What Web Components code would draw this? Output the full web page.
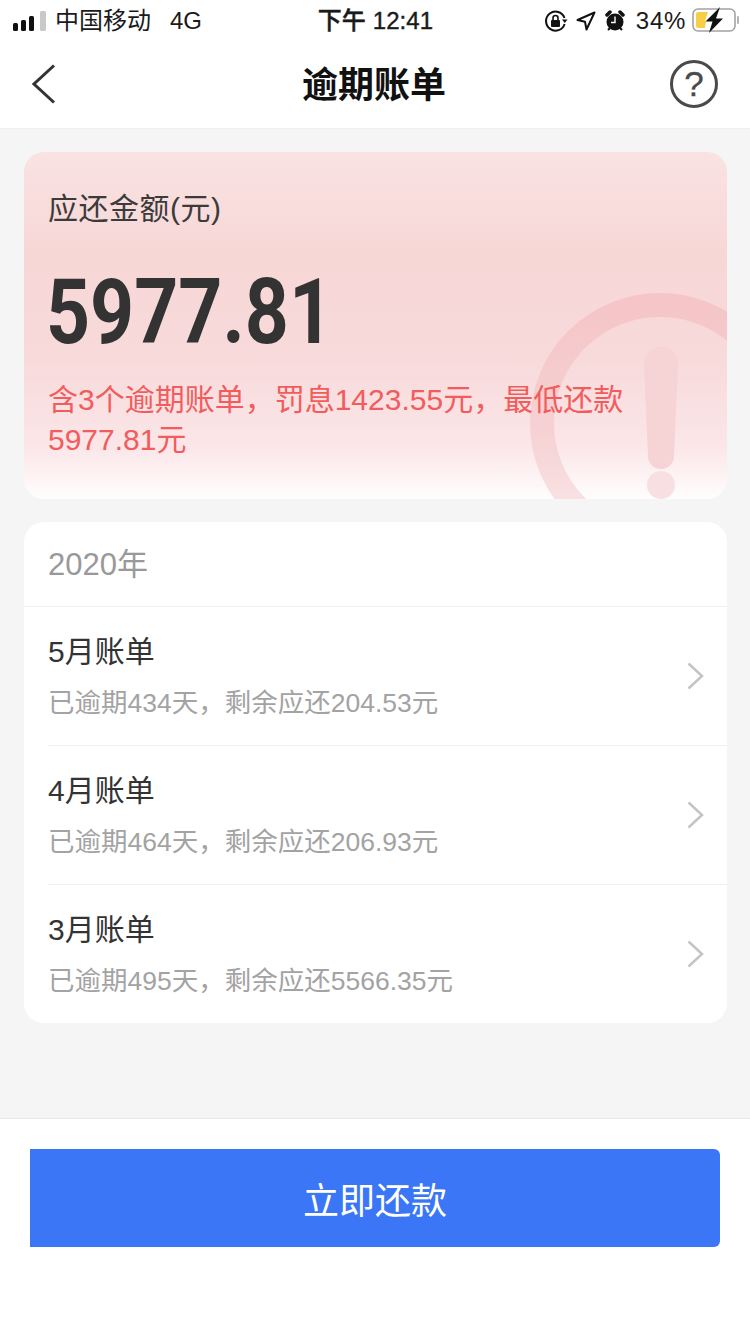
<!DOCTYPE html>
<html lang="zh">
<head>
<meta charset="utf-8">
<title>逾期账单</title>
<style>
html,body{margin:0;padding:0;background:#f5f5f5;}
body{font-family:"Liberation Sans","Noto Sans CJK SC",sans-serif;}
</style>
</head>
<body>
<bill-page>
    <status-bar></status-bar>
    <nav-bar title="逾期账单"></nav-bar>
    <amount-card label="应还金额(元)" amount="5977.81">含3个逾期账单，罚息1423.55元，最低还款5977.81元</amount-card>
    <bill-list year="2020年">
        <bill-row name="5月账单" desc="已逾期434天，剩余应还204.53元"></bill-row>
        <bill-row name="4月账单" desc="已逾期464天，剩余应还206.93元"></bill-row>
        <bill-row name="3月账单" desc="已逾期495天，剩余应还5566.35元"></bill-row>
    </bill-list>
    <pay-footer>立即还款</pay-footer>
</bill-page>
<script>
class BillPage extends HTMLElement{
    constructor(){
        super()
        this.attachShadow({mode : 'open'})
        this.shadowRoot.innerHTML = `
            <style>
                :host{display:flex;flex-direction:column;height:1334px;width:750px;overflow:hidden;background:#f5f5f5;}
                ::slotted(pay-footer){margin-top:auto;}
            </style>
            <slot></slot>
        `
    }
}

class StatusBar extends HTMLElement{
    constructor(){
        super()
        this.attachShadow({mode : 'open'})
        this.shadowRoot.innerHTML = `
            <style>
                :host{display:grid;grid-template-columns:1fr auto 1fr;align-items:center;height:44px;background:#fff;color:#1a1a1a;font-size:24px;line-height:24px;box-sizing:border-box;padding:0 11px 3px 13px;}
                .left,.right{display:flex;align-items:center;}
                .left span{margin-left:9px;}
                .left .net{margin-left:19px;}
                .time{font-weight:500;-webkit-text-stroke:.4px #1a1a1a;letter-spacing:.1px;margin-left:-1px;}
                .right{justify-content:flex-end;}
                .pct{margin:0 6px 0 11px;letter-spacing:.7px;}
                svg{display:block;}
                .battery{margin-bottom:2px;}
            </style>
            <div class="left">
                <svg width="33" height="22" viewBox="0 0 33 22">
                    <rect x="0" y="13" width="5" height="8" rx="1.5" fill="#111"/>
                    <rect x="8" y="10" width="5" height="11" rx="1.5" fill="#111"/>
                    <rect x="16" y="6" width="5" height="15" rx="1.5" fill="#111"/>
                    <rect x="27" y="1" width="6" height="20" rx="1.5" fill="#c9c9c9"/>
                </svg>
                <span>中国移动</span><span class="net">4G</span>
            </div>
            <div class="time">下午 12:41</div>
            <div class="right">
                <svg width="24" height="24" viewBox="0 0 24 24" style="margin-right:8px">
                    <path d="M20.500 9A9.500 9.500 0 1 0 20.600 15" fill="none" stroke="#111" stroke-width="2"/>
                    <path d="M18 10.500h5.500l-2.700 3.500z" fill="#111"/>
                    <rect x="7" y="11" width="9" height="7" rx="1" fill="#111"/>
                    <path d="M9 11V9a2.500 2.500 0 0 1 5 0v2" fill="none" stroke="#111" stroke-width="1.600"/>
                </svg>
                <svg width="20" height="20" viewBox="0 0 20 20" style="margin-right:9px">
                    <path d="M18.500 1.500 10.500 18.500 9 10.800 1.500 9z" fill="none" stroke="#111" stroke-width="2" stroke-linejoin="round"/>
                </svg>
                <svg width="20" height="22" viewBox="0 0 20 22">
                    <circle cx="10" cy="12" r="8.500" fill="#111"/>
                    <path d="M2 5 5 2M18 5 15 2" stroke="#111" stroke-width="3.500" stroke-linecap="round"/>
                    <path d="M3 20l2-2M17 20l-2-2" stroke="#111" stroke-width="2"/>
                    <path d="M10 6.500V12.500H6" fill="none" stroke="#fff" stroke-width="1.400"/>
                </svg>
                <span class="pct">34%</span>
                <svg class="battery" width="47" height="26" viewBox="0 0 47 26">
                    <rect x="1" y="2" width="42" height="22" rx="5" fill="#fff" stroke="#a3a3a3" stroke-width="1.600"/>
                    <path d="M4 7a2 2 0 0 1 2-2h10l-3 9h1l-1 7H6a2 2 0 0 1-2-2z" fill="#f7ce46"/>
                    <path d="M28 0 13.500 14.500h7L17 26 31 11.500h-7z" fill="#111"/>
                    <rect x="45" y="9" width="2" height="8" rx="1" fill="#b5b5b5"/>
                </svg>
            </div>
        `
    }
}

class NavBar extends HTMLElement{
    constructor(){
        super()
        this.attachShadow({mode : 'open'})
    }
    connectedCallback(){
        this.shadowRoot.innerHTML = `
            <style>
                :host{display:grid;grid-template-columns:1fr auto 1fr;align-items:center;height:85px;background:#fff;padding:0 32px;box-sizing:border-box;color:#111;border-bottom:1px solid #efefef;}
                h1{margin:0 1px 0 -1px;font-size:36px;font-weight:700;line-height:1;}
                .help{justify-self:end;display:flex;align-items:center;justify-content:center;width:48px;height:48px;margin-bottom:5px;border:3.500px solid #4a4a4a;border-radius:50%;box-sizing:border-box;color:#4a4a4a;font-size:35px;line-height:1;-webkit-text-stroke:.3px #4a4a4a;}
                svg{display:block;margin-bottom:4px;}
            </style>
            <svg width="24" height="40" viewBox="0 0 24 40"><path d="M22 1.500 2 20l20 18.500" fill="none" stroke="#333" stroke-width="3"/></svg>
            <h1>${this.getAttribute('title')}</h1>
            <div class="help">?</div>
        `
    }
}

class AmountCard extends HTMLElement{
    constructor(){
        super()
        this.attachShadow({mode : 'open'})
    }
    connectedCallback(){
        this.shadowRoot.innerHTML = `
            <style>
                :host{display:block;position:relative;margin:23px 23px 0 24px;height:347px;border-radius:20px;overflow:hidden;box-sizing:border-box;padding:39px 24px 0;
                    background:linear-gradient(180deg,#fae2e3 0%,#f7d7d6 30%,#f8dadb 60%,#fbe6e8 85%,#fffdfd 100%);}
                .mark{position:absolute;right:0;bottom:0;}
                .label,.amount,.note{position:relative;}
                .label{font-size:30px;line-height:36px;color:#3b3b3b;letter-spacing:.5px;}
                .amount{font-family:Roboto,"Liberation Sans",sans-serif;font-size:91px;line-height:91px;font-weight:700;color:#333;margin:40px 0 0 -2px;transform:scaleX(.845);transform-origin:left center;white-space:nowrap;}
                .note{font-size:30px;line-height:40px;color:#f25c5c;margin-top:22px;width:590px;}
            </style>
            <svg class="mark" width="197" height="207" viewBox="0 0 197 207">
                <defs>
                    <linearGradient id="fade" x1="0" y1="0" x2="0" y2="1">
                        <stop offset="0" stop-color="#f5c5c7"/>
                        <stop offset=".55" stop-color="#f6d2d4"/>
                        <stop offset="1" stop-color="#faeaeb"/>
                    </linearGradient>
                </defs>
                <circle cx="130" cy="131" r="118" fill="none" stroke="url(#fade)" stroke-width="24"/>
                <path d="M114 72a17 17 0 0 1 34 0l-4 92a13 13 0 0 1-26 0z" fill="#f6d3d5"/>
                <circle cx="131" cy="193" r="14" fill="#f8e0e2"/>
            </svg>
            <div class="label">${this.getAttribute('label')}</div>
            <div class="amount">${this.getAttribute('amount')}</div>
            <div class="note"><slot></slot></div>
        `
    }
}

class BillList extends HTMLElement{
    constructor(){
        super()
        this.attachShadow({mode : 'open'})
    }
    connectedCallback(){
        this.shadowRoot.innerHTML = `
            <style>
                :host{display:block;margin:23px 23px 0 24px;background:#fff;border-radius:20px;overflow:hidden;}
                .year{height:85px;box-sizing:border-box;padding:0 24px 6px;display:flex;align-items:center;font-size:31px;color:#999;border-bottom:1px solid #efefef;}
            </style>
            <div class="year">${this.getAttribute('year')}</div>
            <slot></slot>
        `
    }
}

class BillRow extends HTMLElement{
    constructor(){
        super()
        this.attachShadow({mode : 'open'})
    }
    connectedCallback(){
        this.shadowRoot.innerHTML = `
            <style>
                :host{display:block;padding-left:24px;}
                .inner{display:flex;align-items:center;justify-content:space-between;height:139px;box-sizing:border-box;padding:0 23px 0 0;border-bottom:1px solid #efefef;}
                :host(:last-child) .inner{border-bottom:0;height:138px;}
                .name{font-size:30px;line-height:36px;color:#333;}
                .desc{font-size:26.500px;line-height:32px;color:#a3a3a3;margin-top:17px;}
                svg{display:block;}
            </style>
            <div class="inner">
                <div>
                    <div class="name">${this.getAttribute('name')}</div>
                    <div class="desc">${this.getAttribute('desc')}</div>
                </div>
                <svg width="17" height="28" viewBox="0 0 17 28"><path d="M1.500 1.500 15 14 1.500 26.500" fill="none" stroke="#c4c4c4" stroke-width="2.500"/></svg>
            </div>
        `
    }
}

class PayFooter extends HTMLElement{
    constructor(){
        super()
        this.attachShadow({mode : 'open'})
        this.shadowRoot.innerHTML = `
            <style>
                :host{display:block;height:216px;box-sizing:border-box;background:#fff;border-top:1px solid #e8e8e8;padding:30px 30px 0;}
                .btn{display:flex;align-items:center;justify-content:center;height:98px;background:#3b76f6;color:#fff;font-size:36px;border-radius:0 6px 6px 0;}
            </style>
            <div class="btn"><slot></slot></div>
        `
    }
}

customElements.define('bill-page', BillPage)
customElements.define('status-bar', StatusBar)
customElements.define('nav-bar', NavBar)
customElements.define('amount-card', AmountCard)
customElements.define('bill-list', BillList)
customElements.define('bill-row', BillRow)
customElements.define('pay-footer', PayFooter)
</script>
</body>
</html>
